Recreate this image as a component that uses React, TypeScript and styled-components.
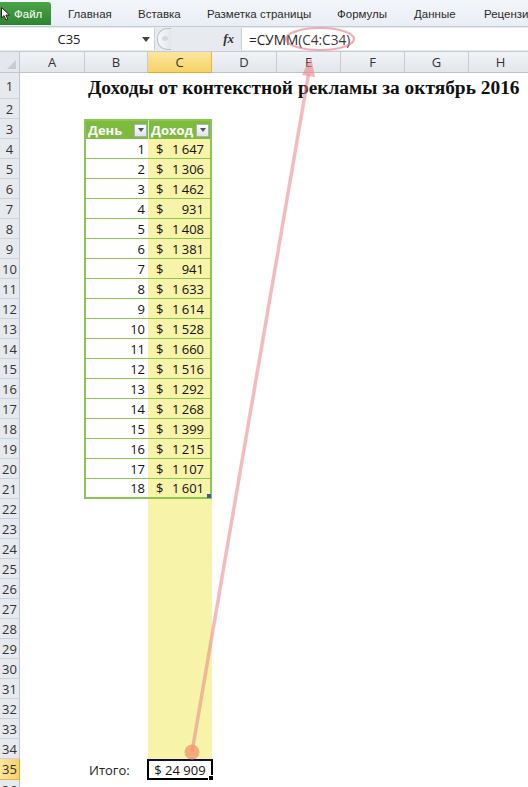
import React from "react";
import styled, { createGlobalStyle } from "styled-components";

const Global = createGlobalStyle`
  html, body { margin: 0; padding: 0; background: #fff; }
  body { width: 528px; height: 787px; overflow: hidden; font-family: "Open Sans", "Noto Sans", sans-serif; }
`;

const Page = styled.div`
  position: relative;
  width: 528px;
  height: 787px;
  overflow: hidden;
  background: #fff;
`;

const Ribbon = styled.div`
  height: 26px;
  display: flex;
  align-items: flex-end;
  background: linear-gradient(#f3f6fa, #e9eef5);
  font-family: "Liberation Sans", Arial, sans-serif;
  font-size: 11.5px;
  color: #2b2b2b;
  box-sizing: border-box;
  white-space: nowrap;
`;

const FileTab = styled.div`
  width: 51px;
  height: 23px;
  margin-bottom: 1px;
  margin-right: 17px;
  flex-shrink: 0;
  background: linear-gradient(#4aa34a, #2f8431);
  border-top-right-radius: 3px;
  color: #fff;
  display: flex;
  align-items: center;
  gap: 3px;
  padding-left: 1px;
  box-sizing: border-box;
`;

const Tab = styled.div<{ $w: number }>`
  width: ${(p) => p.$w}px;
  flex-shrink: 0;
  height: 24px;
  display: flex;
  align-items: center;
`;

const FormulaBar = styled.div`
  height: 26px;
  display: flex;
  align-items: stretch;
  background: #e7ebf0;
  border-top: 1px solid #c3cbd6;
  border-bottom: 1px solid #c3cbd6;
  box-sizing: border-box;
  padding: 1px 0;
`;

const NameBox = styled.div`
  width: 138px;
  flex-shrink: 0;
  background: #fff;
  display: flex;
  align-items: center;
  justify-content: center;
  font-size: 13px;
  color: #222;
`;

const NameDrop = styled.div`
  width: 16px;
  flex-shrink: 0;
  background: #fff;
  display: flex;
  align-items: center;
  justify-content: center;
  border-right: 1px solid #c9d0d9;
`;

const Splitter = styled.div`
  width: 86px;
  flex-shrink: 0;
  display: flex;
  align-items: center;
  justify-content: space-between;
  padding: 0 7px 0 2px;
  box-sizing: border-box;
`;

const Knob = styled.div`
  width: 13px;
  height: 20px;
  border-radius: 10px 0 0 10px;
  border: 1px solid #b8c0ca;
  border-right: none;
  background: linear-gradient(90deg, #f6f7f9, #e3e7ec);
  position: relative;
  &::after {
    content: "";
    position: absolute;
    left: 4px;
    top: 7px;
    width: 6px;
    height: 5px;
    border-radius: 50%;
    background: #d4d9df;
  }
`;

const Fx = styled.span`
  font-family: "Liberation Serif", serif;
  font-style: italic;
  font-weight: bold;
  font-size: 13px;
  color: #333;
`;

const FormulaInput = styled.div`
  flex: 1;
  background: #fff;
  border-left: 1px solid #c9d0d9;
  display: flex;
  align-items: center;
  padding-left: 7px;
  font-size: 13.6px;
  color: #222;
`;

const Ref = styled.span`
  color: #3a3a3a;
`;

const SheetRow = styled.div<{ $h: number }>`
  display: flex;
  height: ${(p) => p.$h}px;
`;

const Corner = styled.div`
  width: 20px;
  flex-shrink: 0;
  box-sizing: border-box;
  background: #e4e8ee;
  border-right: 1px solid #c0c7d0;
  border-bottom: 1px solid #c0c7d0;
  position: relative;
  &::after {
    content: "";
    position: absolute;
    right: 3px;
    bottom: 3px;
    border-left: 9px solid transparent;
    border-bottom: 9px solid #c5ccd5;
  }
`;

const ColHead = styled.div<{ $w: number; $sel?: boolean }>`
  width: ${(p) => p.$w}px;
  flex-shrink: 0;
  box-sizing: border-box;
  display: flex;
  align-items: center;
  justify-content: center;
  font-size: 13px;
  color: #333;
  background: ${(p) => (p.$sel ? "linear-gradient(#fbe6a0, #f7d266)" : "linear-gradient(#f1f3f6, #e2e6eb)")};
  border-right: 1px solid ${(p) => (p.$sel ? "#e5b548" : "#c6ccd4")};
  border-bottom: 1px solid ${(p) => (p.$sel ? "#e0a835" : "#bcc3cc")};
`;

const RowHead = styled.div<{ $sel?: boolean }>`
  width: 20px;
  flex-shrink: 0;
  box-sizing: border-box;
  display: flex;
  align-items: center;
  justify-content: center;
  font-size: 13px;
  color: #333;
  background: ${(p) => (p.$sel ? "linear-gradient(90deg, #fbe6a0, #f7d266)" : "#e6eaef")};
  border-right: 1px solid ${(p) => (p.$sel ? "#e0a835" : "#bcc3cc")};
  border-bottom: 1px solid ${(p) => (p.$sel ? "#e5b548" : "#cdd3da")};
`;

const Cell = styled.div<{ $w: number; $bg?: string }>`
  width: ${(p) => p.$w}px;
  flex-shrink: 0;
  box-sizing: border-box;
  background: ${(p) => p.$bg || "#fff"};
  display: flex;
  align-items: center;
  font-size: 13px;
  color: #111;
  position: relative;
`;

const TitleCell = styled.div`
  flex: 1;
  padding-left: 68px;
  display: flex;
  align-items: center;
  font-family: "Liberation Serif", "Times New Roman", serif;
  font-weight: bold;
  font-size: 19.4px;
  color: #111;
  white-space: nowrap;
  padding-top: 3px;
`;

const TCell = styled.div<{ $w: number; $bg: string; $first?: boolean; $last?: boolean; $head?: boolean; $bottom?: boolean }>`
  width: ${(p) => p.$w}px;
  flex-shrink: 0;
  box-sizing: border-box;
  background: ${(p) => p.$bg};
  border-bottom: ${(p) => (p.$bottom ? "2px solid #8cc652" : p.$head ? "none" : "1px solid #8cc652")};
  border-left: ${(p) => (p.$first ? "2px solid #8cc652" : p.$head ? "1px solid #d8ecc4" : "none")};
  border-right: ${(p) => (p.$last ? "2px solid #8cc652" : "none")};
  border-top: ${(p) => (p.$head ? "2px solid #8cc652" : "none")};
  display: flex;
  align-items: center;
  font-size: 13px;
  color: #111;
  position: relative;
`;

const HeadText = styled.span`
  color: #fff;
  font-weight: bold;
  font-size: 13px;
  padding-left: 2px;
  flex: 1;
`;

const FilterBtn = styled.div`
  width: 13px;
  height: 13px;
  margin-right: 1px;
  box-sizing: border-box;
  border: 1px solid #a9b1bb;
  background: linear-gradient(#fbfbfc, #dfe3e8);
  display: flex;
  align-items: center;
  justify-content: center;
  &::after {
    content: "";
    border-left: 3.5px solid transparent;
    border-right: 3.5px solid transparent;
    border-top: 4px solid #4d5560;
  }
`;

const DayNum = styled.span`
  flex: 1;
  text-align: right;
  padding-right: 3px;
`;

const Money = styled.div`
  flex: 1;
  display: flex;
  justify-content: space-between;
  padding: 0 6px 0 8px;
`;

const ResizeHandle = styled.div`
  position: absolute;
  right: -1px;
  bottom: -1px;
  width: 4px;
  height: 4px;
  background: #3d5d9a;
`;

const LabelText = styled.span`
  padding-left: 4px;
  color: #222;
`;

const TotalCell = styled.div`
  width: 66px;
  flex-shrink: 0;
  margin-left: -1px;
  box-sizing: border-box;
  border: 2px solid #000;
  border-top-color: #101040;
  display: flex;
  align-items: center;
  justify-content: center;
  font-size: 13px;
  color: #111;
  position: relative;
  background: #fff;
`;

const FillHandle = styled.div`
  position: absolute;
  right: -4px;
  bottom: -4px;
  width: 5px;
  height: 5px;
  background: #000;
  border: 1px solid #fff;
`;

const Overlay = styled.svg`
  position: absolute;
  left: 0;
  top: 0;
  pointer-events: none;
`;

const COLS: [string, number][] = [
  ["A", 65],
  ["B", 63],
  ["C", 64],
  ["D", 65],
  ["E", 64],
  ["F", 64],
  ["G", 64],
  ["H", 64],
];

const YELLOW = "#f7f3a8";

const data = [1647, 1306, 1462, 931, 1408, 1381, 941, 1633, 1614, 1528, 1660, 1516, 1292, 1268, 1399, 1215, 1107, 1601];

const fmt = (n: number) => {
  const s = String(n);
  return s.length > 3 ? s.slice(0, s.length - 3) + "\u2009" + s.slice(-3) : s;
};

function Cursor() {
  return (
    <svg width="10" height="14" viewBox="0 0 10 14">
      <path d="M0.5 0.5 L0.5 11 L3 8.6 L5 13 L6.8 12.2 L4.9 8 L8.5 8 Z" fill="#fff" stroke="#222" strokeWidth="1" />
    </svg>
  );
}

export default function App() {
  const rest = (from: number) => COLS.slice(from).map(([n, w]) => <Cell key={n} $w={w} />);

  const rows: React.ReactNode[] = [];
  rows.push(
    <SheetRow key={1} $h={26}>
      <RowHead>1</RowHead>
      <TitleCell>Доходы от контекстной рекламы за октябрь 2016</TitleCell>
    </SheetRow>
  );
  rows.push(
    <SheetRow key={2} $h={20}>
      <RowHead>2</RowHead>
      {rest(0)}
    </SheetRow>
  );
  rows.push(
    <SheetRow key={3} $h={20}>
      <RowHead>3</RowHead>
      <Cell $w={64} />
      <TCell $w={64} $bg="#7dbb3f" $first $head>
        <HeadText>День</HeadText>
        <FilterBtn />
      </TCell>
      <TCell $w={64} $bg="#7dbb3f" $last $head>
        <HeadText>Доход</HeadText>
        <FilterBtn />
      </TCell>
      {rest(3)}
    </SheetRow>
  );
  data.forEach((v, i) => {
    const r = i + 4;
    const bottom = i === data.length - 1;
    rows.push(
      <SheetRow key={r} $h={20}>
        <RowHead>{r}</RowHead>
        <Cell $w={64} />
        <TCell $w={64} $bg="#fff" $first $bottom={bottom}>
          <DayNum>{i + 1}</DayNum>
        </TCell>
        <TCell $w={64} $bg={YELLOW} $last $bottom={bottom}>
          <Money>
            <span>$</span>
            <span>{fmt(v)}</span>
          </Money>
          {bottom && <ResizeHandle />}
        </TCell>
        {rest(3)}
      </SheetRow>
    );
  });
  for (let r = 22; r <= 34; r++) {
    rows.push(
      <SheetRow key={r} $h={20}>
        <RowHead>{r}</RowHead>
        <Cell $w={65} />
        <Cell $w={63} />
        <Cell $w={64} $bg={YELLOW} />
        {rest(3)}
      </SheetRow>
    );
  }
  rows.push(
    <SheetRow key={35} $h={21}>
      <RowHead $sel>35</RowHead>
      <Cell $w={65} />
      <Cell $w={63}>
        <LabelText>Итого:</LabelText>
      </Cell>
      <TotalCell>
        $ 24 909
        <FillHandle />
      </TotalCell>
      {rest(3)}
    </SheetRow>
  );
  rows.push(
    <SheetRow key={36} $h={20}>
      <RowHead>36</RowHead>
      {rest(0)}
    </SheetRow>
  );

  return (
    <Page>
      <Global />
      <Ribbon>
        <FileTab>
          <Cursor />
          Файл
        </FileTab>
        <Tab $w={70}>Главная</Tab>
        <Tab $w={69}>Вставка</Tab>
        <Tab $w={130}>Разметка страницы</Tab>
        <Tab $w={77}>Формулы</Tab>
        <Tab $w={70}>Данные</Tab>
        <Tab $w={100}>Рецензирование</Tab>
      </Ribbon>
      <FormulaBar>
        <NameBox>C35</NameBox>
        <NameDrop>
          <svg width="8" height="5" viewBox="0 0 8 5">
            <path d="M0 0 L8 0 L4 5 Z" fill="#444" />
          </svg>
        </NameDrop>
        <Splitter>
          <Knob />
          <Fx>fx</Fx>
        </Splitter>
        <FormulaInput>
          =СУММ<Ref>(C4:C34)</Ref>
        </FormulaInput>
      </FormulaBar>
      <SheetRow $h={21}>
        <Corner />
        {COLS.map(([n, w]) => (
          <ColHead key={n} $w={w} $sel={n === "C"}>
            {n}
          </ColHead>
        ))}
      </SheetRow>
      {rows}
      <Overlay width="528" height="787" viewBox="0 0 528 787">
        <ellipse cx="320" cy="39" rx="34" ry="11" fill="none" stroke="rgba(232,120,135,0.6)" strokeWidth="2.2" />
        <line x1="192" y1="752" x2="308.5" y2="74" stroke="rgba(236,130,140,0.55)" strokeWidth="3.5" />
        <polygon points="311,57 315,77 302,75" fill="rgba(236,130,140,0.6)" />
        <circle cx="192" cy="752" r="7.5" fill="rgba(240,150,110,0.75)" />
      </Overlay>
    </Page>
  );
}
